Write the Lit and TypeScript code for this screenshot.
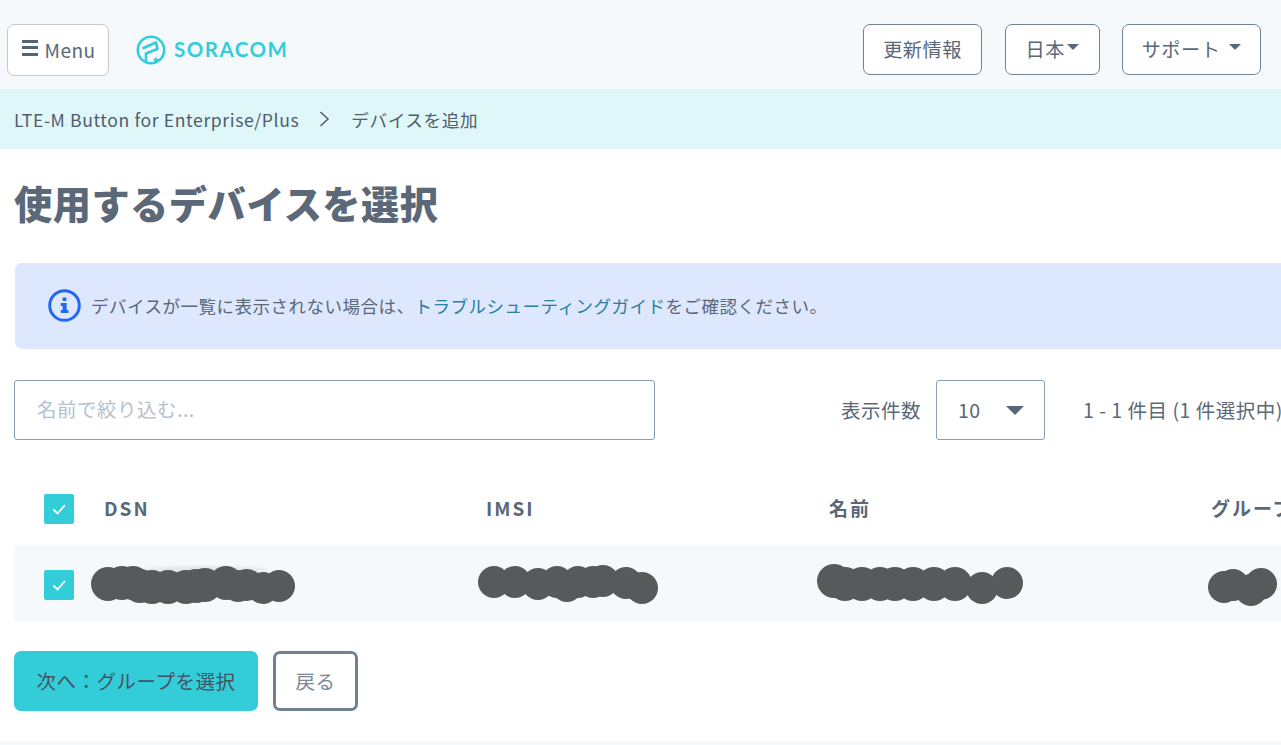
import { LitElement, html, css, svg } from "lit";
import { customElement } from "lit/decorators.js";

const blobs: [number, number, number][] = [
  [108,584,17],[122,583,17],[133,583,17],[140,586,17],[152,587,17],[168,587,17],[186,587,17],[196,586,17],[205,585,17],[226,583,17],[238,586,16],[247,585,16],[263,588,16],[279,586,16],
  [494,582,16],[515,582,16],[538,584,16],[557,582,16],[567,586,16],[578,582,16],[593,582,16],[603,581,16],[626,583,16],[642,588,16],
  [834,581,17],[845,584,17],[862,584,17],[880,584,17],[895,584,17],[913,584,17],[934,584,17],[955,584,17],[982,588,16],[1007,583,16],
  [1224,587,16],[1233,585,16],[1251,590,16],[1261,584,16],
];

const check = html`<svg class="check" viewBox="0 0 30 30"><path d="M9.5 15.5l4 4 7.5-8.5" fill="none" stroke="#fff" stroke-width="1.8"/></svg>`;

@customElement("app-root")
export class AppRoot extends LitElement {
  static styles = css`
    :host { display: block; width: 1281px; height: 745px; overflow: hidden; position: relative; background: #fff;
      font-family: "Noto Sans CJK JP", "Noto Sans", sans-serif; font-size: 19.5px; letter-spacing: 0.5px; color: #5a6878; }
    .top { height: 89px; background: #f5f9fc; display: flex; align-items: center; padding: 10px 20px 0 7px; box-sizing: border-box; }
    .btn { box-sizing: border-box; height: 51px; padding-bottom: 2px; background: #fff; border: 1px solid #718096; border-radius: 7px; display: flex; align-items: center; justify-content: center; color: #5a6878; font-size: 19.2px; }
    .menu { width: 102px; height: 52px; border-color: #c8c8cc; gap: 6px; font-size: 19px; padding: 0 0 0 2px; }
    .bars { width: 16px; height: 16px; margin-top: -4px; background: linear-gradient(#556577 0 3px, transparent 3px 6.5px, #556577 6.5px 9.5px, transparent 9.5px 13px, #556577 13px 16px); }
    .logo { display: flex; align-items: center; margin-left: 27px; gap: 8px; color: #33cdd9; }
    .logotext { font-family: "Lato", sans-serif; font-weight: 700; font-size: 20.5px; letter-spacing: 1.5px; line-height: 1; }
    .spacer { flex: 1; }
    .b1 { width: 119px; }
    .b2 { width: 95px; margin-left: 23px; gap: 2.5px; }
    .b3 { width: 139px; margin-left: 22px; gap: 9px; }
    .caret { width: 0; height: 0; border-left: 6px solid transparent; border-right: 6px solid transparent; border-top: 6px solid #5a6878; margin-top: -3px; }
    .crumb { height: 60px; background: #dff7f9; display: flex; align-items: center; padding-left: 14px; font-size: 17.6px; letter-spacing: 0.6px; color: #4f5d6e; }
    .chev { margin: 0 21px 0 20px; display: block; }
    main { width: 1700px; padding: 0 14px; box-sizing: border-box; }
    h1 { margin: 0; height: 114px; padding-bottom: 6px; box-sizing: border-box; display: flex; align-items: center; font-size: 38.2px; font-weight: 900; color: #5a6878; line-height: 1; }
    .alert { height: 86px; background: #dde7fe; border-radius: 7px; display: flex; align-items: center; padding: 0 0 1px 33px; box-sizing: border-box; gap: 10px; font-size: 17.5px; margin-left: 1px; }
    .alert a { color: #2a7f9e; text-decoration: none; }
    .filters { display: flex; align-items: center; margin-top: 31px; height: 60px; }
    .input { box-sizing: border-box; width: 641px; height: 60px; border: 1px solid #8a9db5; border-radius: 3px; display: flex; align-items: center; padding: 0 0 3px 22px; color: #b4c0cd; }
    .lbl { margin-left: 186px; padding-bottom: 1px; }
    .sel { box-sizing: border-box; width: 109px; height: 60px; border: 1px solid #8a9db5; border-radius: 3px; margin-left: 15px; display: flex; align-items: center; justify-content: space-between; padding: 0 20px 2px 21px; }
    .sel .caret { border-left-width: 9px; border-right-width: 9px; border-top-width: 9px; margin-top: 2px; border-top-color: #56677a; }
    .count { margin-left: 38px; padding-bottom: 2px; white-space: nowrap; }
    .row { display: grid; grid-template-columns: 90px 382px 343px 382px 1fr; align-items: center; box-sizing: border-box; }
    .head { height: 66px; margin-top: 39px; padding-bottom: 6px; font-weight: 700; font-size: 19px; letter-spacing: 2px; }
    .head span { margin-bottom: 4px; }
    .body { height: 76px; background: #f5f9fc; padding-top: 4px; }
    .cb { width: 30px; height: 30px; background: #33cdd9; border-radius: 2px; margin-left: 30px; }
    .check { display: block; width: 30px; height: 30px; }
    .actions { display: flex; margin-top: 30px; gap: 15px; }
    .next { box-sizing: border-box; width: 244px; height: 60px; padding-bottom: 2px; background: #33cdd9; border-radius: 7px; display: flex; align-items: center; justify-content: center; color: #465261; }
    .back { box-sizing: border-box; width: 85px; height: 60px; padding-bottom: 2px; border: 3px solid #718096; border-radius: 7px; display: flex; align-items: center; justify-content: center; color: #7a8898; }
    .foot { position: absolute; left: 0; right: 0; top: 741px; height: 4px; background: #f5f9fc; }
    .mask { position: absolute; left: 0; top: 0; pointer-events: none; }
  `;

  render() {
    return html`
      <div class="top">
        <div class="btn menu"><span class="bars"></span>Menu</div>
        <div class="logo">
          <svg width="30" height="30" viewBox="0 0 30 30" fill="none" stroke="#33cdd9" stroke-width="2.6">
            <circle cx="15" cy="15" r="13.2"/>
            <path d="M6.5 13.5L20 7.5l1.5 6.5L10 18.5V26" stroke-linejoin="round"/>
            <path d="M20 21.5l1 2.2 2.3.2-1.8 1.5.6 2.2-2.1-1.2-2.1 1.2.6-2.2-1.8-1.5 2.3-.2z" fill="#33cdd9" stroke="none"/>
          </svg>
          <span class="logotext">SORACOM</span>
        </div>
        <div class="spacer"></div>
        <div class="btn b1">更新情報</div>
        <div class="btn b2">日本<span class="caret"></span></div>
        <div class="btn b3">サポート<span class="caret"></span></div>
      </div>
      <div class="crumb">LTE-M Button for Enterprise/Plus
        <svg class="chev" width="11" height="16" viewBox="0 0 11 16"><path d="M1.5 1l7.5 7-7.5 7" fill="none" stroke="#4f5d6e" stroke-width="1.5"/></svg>
        デバイスを追加</div>
      <main>
        <h1>使用するデバイスを選択</h1>
        <div class="alert">
          <svg width="33" height="33" viewBox="0 0 33 33"><circle cx="16.5" cy="16.5" r="14.8" fill="none" stroke="#2168f5" stroke-width="3"/><rect x="14.6" y="8.5" width="3.8" height="3.6" rx=".8" fill="#2168f5"/><path d="M12.8 14h5.8v7h1.8v3h-7.6v-3h1.8v-4h-1.8z" fill="#2168f5"/></svg>
          <span>デバイスが一覧に表示されない場合は、<a>トラブルシューティングガイド</a>をご確認ください。</span>
        </div>
        <div class="filters">
          <div class="input">名前で絞り込む...</div>
          <span class="lbl">表示件数</span>
          <div class="sel"><span>10</span><span class="caret"></span></div>
          <span class="count">1 - 1 件目 (1 件選択中)</span>
        </div>
        <div class="row head"><div class="cb">${check}</div><span>DSN</span><span>IMSI</span><span>名前</span><span>グループ</span></div>
        <div class="row body"><div class="cb">${check}</div></div>
        <div class="actions"><div class="next">次へ：グループを選択</div><div class="back">戻る</div></div>
      </main>
      <div class="foot"></div>
      <svg class="mask" width="1281" height="745">
        <defs><filter id="soft"><feGaussianBlur stdDeviation="1.5"/></filter></defs>
        <ellipse cx="205" cy="570" rx="62" ry="4" fill="#e6e6e8" filter="url(#soft)"/>
        ${blobs.map(([x, y, r]) => svg`<circle cx=${x} cy=${y} r=${r} fill="#58595b"/>`)}
      </svg>
    `;
  }
}
